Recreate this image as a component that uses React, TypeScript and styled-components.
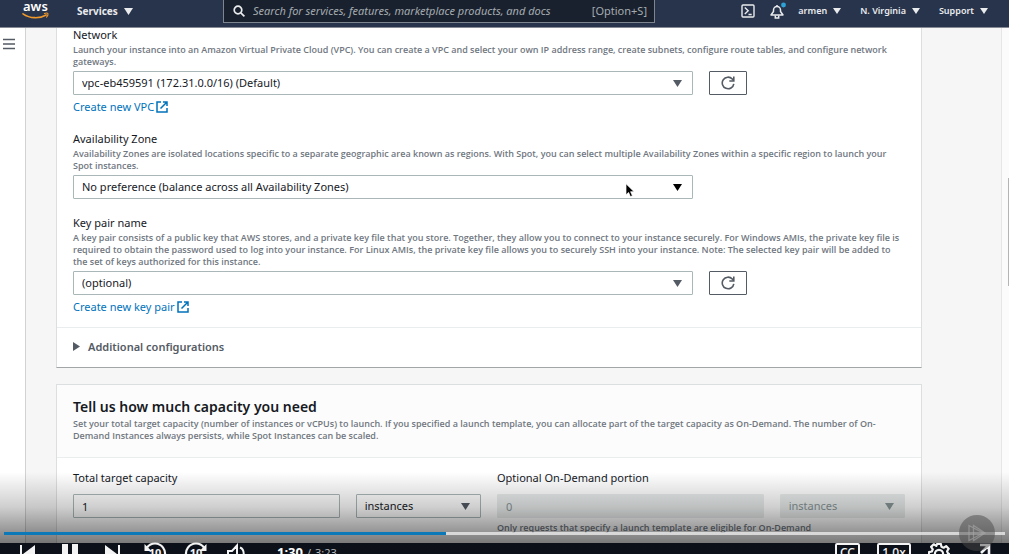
import React from 'react';
import styled, { createGlobalStyle } from 'styled-components';

const GlobalStyle = createGlobalStyle`
  *, *::before, *::after { box-sizing: border-box; }
  body { margin: 0; }
  body, button, input, select { font-family: 'Noto Sans', 'Open Sans', sans-serif; }
`;

const color = {
  nav: '#28344c',
  text: '#16191f',
  muted: '#70777f',
  icon: '#545b64',
  link: '#0073bb',
  border: '#aab7b8',
  line: '#eaeded',
};

/* ---------- shell ---------- */

const Player = styled.div`
  position: relative;
  display: flex;
  flex-direction: column;
  height: 100vh;
  overflow: hidden;
  background: #0d131c;
  color: ${color.text};
  font-size: 11px;
  line-height: 16px;
`;

const Body = styled.div`
  flex: 1;
  min-height: 0;
  display: flex;
  margin-bottom: 11px;
  background: #f6f6f6;
`;

const SideRail = styled.aside`
  flex: none;
  width: 26px;
  padding: 11px 0 0 3px;
  background: #fff;
  border-right: 1px solid #cfd3d3;
`;

const Content = styled.main`
  flex: 1;
  min-width: 0;
  overflow: hidden;
  padding: 0 79px 0 30px;
`;

const ScrollTrack = styled.div`
  flex: none;
  width: 8px;
  padding-top: 151px;
  background: #fbfbfb;
  border-left: 1px solid #e6e6e6;
`;

const ScrollThumb = styled.div`
  width: 1px;
  height: 108px;
  margin-left: auto;
  background: #b4b4b4;
`;

/* ---------- navigation ---------- */

const NavBar = styled.header`
  flex: none;
  position: relative;
  display: flex;
  align-items: center;
  height: 27px;
  padding: 0 21px 5px 22px;
  background: ${color.nav};
  box-shadow: 0 1px 0 #858a94;
  color: #e9ebed;
`;

const IconButton = styled.button`
  display: flex;
  align-items: center;
  justify-content: center;
  flex: none;
  padding: 0;
  border: 0;
  background: none;
  color: inherit;
`;

const NavMenu = styled.button<{ $large?: boolean }>`
  display: flex;
  align-items: center;
  flex: none;
  gap: 6px;
  padding: 0;
  border: 0;
  background: none;
  color: inherit;
  font-size: ${(p) => (p.$large ? 10 : 9)}px;
  font-weight: ${(p) => (p.$large ? 700 : 600)};
  line-height: 16px;
  white-space: nowrap;
`;

const ServicesSlot = styled.div`
  flex: 1 1 170px;
  max-width: 146px;
  margin-left: 28px;
`;

const SearchBox = styled.label`
  flex: 0 1 432px;
  min-width: 0;
  align-self: flex-start;
  display: flex;
  align-items: center;
  gap: 8px;
  height: 23px;
  padding: 0 7px 0 9px;
  border: 1px solid #7d858f;
  border-top: 0;
  background: #1a212e;
  color: #a4abb0;
  white-space: nowrap;
`;

const SearchInput = styled.input`
  flex: 1;
  min-width: 0;
  padding: 0;
  border: 0;
  outline: 0;
  background: none;
  color: inherit;
  font-size: 11px;
  font-style: italic;
  line-height: 16px;
  &::placeholder { color: inherit; opacity: 1; }
`;

const NavRight = styled.nav`
  display: flex;
  align-items: center;
  margin-left: auto;
  gap: 19px;
`;

const NavIcons = styled.div`
  display: flex;
  align-items: center;
  gap: 15px;
  margin-right: -7px;
`;

/* ---------- cards and form ---------- */

const Card = styled.section`
  margin-bottom: 16px;
  background: #fff;
  border: 1px solid #dcdfdf;
  border-bottom-color: #a2a6a6;
`;

const ScrolledCard = styled(Card)`
  border-top: 0;
`;

const CardBody = styled.div<{ $flush?: boolean }>`
  display: flex;
  flex-direction: column;
  gap: 16px;
  padding: ${(p) => (p.$flush ? 0 : 12)}px 16px 12px;
`;

const CardHeader = styled.div`
  padding: 12px 16px 15px;
  background: #fcfcfc;
  border-bottom: 1px solid ${color.line};
`;

const Title = styled.h2`
  margin: 0;
  font-size: 14px;
  font-weight: 600;
  line-height: 20px;
`;

const Help = styled.p`
  margin: 1px 0 0;
  color: ${color.muted};
  font-family: 'Open Sans', 'Noto Sans', sans-serif;
  font-size: 9px;
  font-weight: 600;
  line-height: 12px;
`;

const Field = styled.div`
  display: flex;
  flex-direction: column;
  min-width: 0;
`;

const Label = styled.label`
  font-size: 11px;
  line-height: 16px;
`;

const ControlRow = styled.div`
  display: grid;
  grid-template-columns: repeat(12, minmax(0, 1fr));
  column-gap: 16px;
  margin-top: 3px;
  > :first-child { grid-column: span 9; }
`;

const SelectBox = styled.div<{ $disabled?: boolean; $active?: boolean }>`
  position: relative;
  min-width: 0;
  color: ${(p) => (p.$disabled ? '#879596' : p.$active ? '#000' : color.icon)};
`;

const Select = styled.select`
  display: block;
  width: 100%;
  height: 24px;
  padding: 0 24px 2px 8px;
  appearance: none;
  border: 1px solid ${color.border};
  border-radius: 1px;
  background: #fff;
  color: ${color.text};
  font-size: 11px;
  opacity: 1;
  &:disabled { background: ${color.line}; border-color: ${color.line}; color: #879596; }
`;

const SelectCaret = styled.span`
  position: absolute;
  top: 0;
  right: 11px;
  display: flex;
  align-items: center;
  height: 24px;
  pointer-events: none;
`;

const Pointer = styled.svg`
  position: absolute;
  top: 8px;
  right: 57px;
`;

const TextInput = styled.input`
  width: 100%;
  height: 24px;
  padding: 0 8px;
  border: 1px solid ${color.border};
  border-radius: 1px;
  background: #fff;
  color: ${color.text};
  font-size: 11px;
  &:disabled { background: ${color.line}; border-color: ${color.line}; color: #879596; }
`;

const RefreshButton = styled.button`
  display: flex;
  align-items: center;
  justify-content: center;
  width: 38px;
  height: 24px;
  padding: 0;
  border: 1px solid ${color.icon};
  border-radius: 1px;
  background: #fff;
  color: ${color.icon};
`;

const ActionLink = styled.a`
  display: flex;
  align-items: center;
  align-self: flex-start;
  gap: 2px;
  margin-top: 4px;
  color: ${color.link};
  text-decoration: none;
`;

const Expander = styled.button`
  display: flex;
  align-items: center;
  gap: 8px;
  width: 100%;
  height: 40px;
  padding: 0 16px 2px;
  border: 0;
  border-top: 1px solid ${color.line};
  background: none;
  color: ${color.icon};
  font-size: 11px;
  font-weight: 600;
`;

const CapacityGrid = styled.div`
  display: grid;
  grid-template-columns: repeat(6, minmax(0, 1fr));
  column-gap: 16px;
  row-gap: 8px;
`;

const Span = styled.div<{ $cols: number; $start?: number }>`
  grid-column: ${(p) => (p.$start ? `${p.$start} / ` : '')}span ${(p) => p.$cols};
  min-width: 0;
  display: flex;
  flex-direction: column;
`;

const LowerHelp = styled(Span)`
  margin-top: -5px;
`;

/* ---------- video overlay ---------- */

const Overlay = styled.div`
  position: absolute;
  left: 0;
  right: 0;
  bottom: 0;
  display: flex;
  flex-direction: column;
  height: 82px;
  overflow: hidden;
  background: linear-gradient(rgba(0, 0, 0, 0), rgba(0, 0, 0, 0.19) 35px, rgba(0, 0, 0, 0.52) 71px, rgba(0, 0, 0, 0.1) 71px);
`;

const Seek = styled.input<{ $played: number }>`
  flex: none;
  display: block;
  height: 3px;
  margin: 60px 4px 8px;
  appearance: none;
  outline: 0;
  background: linear-gradient(to right, #0b78b8 ${(p) => p.$played}%, rgba(255, 255, 255, 0.65) ${(p) => p.$played}%);
  &::-webkit-slider-thumb { appearance: none; width: 0; height: 0; }
`;

const Controls = styled.div`
  flex: none;
  display: flex;
  align-items: flex-start;
  padding: 0 18px;
  color: #f4f4f4;
`;

const ControlGroup = styled.div<{ $gap: number; $before?: number; $end?: boolean }>`
  display: flex;
  align-items: flex-start;
  gap: ${(p) => p.$gap}px;
  margin-left: ${(p) => (p.$end ? 'auto' : `${p.$before ?? 0}px`)};
`;

const Time = styled.div`
  display: flex;
  align-items: baseline;
  gap: 4px;
  margin-left: 28px;
  font-size: 11px;
  line-height: 18px;
  color: #b5b8bc;
`;

const Elapsed = styled.strong`
  color: #fff;
  font-size: 13px;
`;

const BoxedButton = styled.button<{ $width: number }>`
  flex: none;
  width: ${(p) => p.$width}px;
  height: 20px;
  padding: 0;
  border: 2px solid #f4f4f4;
  border-radius: 2px;
  background: none;
  color: #f4f4f4;
  font-size: 12px;
  font-weight: 500;
  line-height: 16px;
`;

const Watermark = styled.svg`
  position: absolute;
  right: 14px;
  bottom: 3px;
`;

/* ---------- icons ---------- */

const Caret = ({ size = 9 }: { size?: number }) => (
  <svg width={size} height={size === 9 ? 7 : 6} viewBox="0 0 9 7" fill="currentColor" preserveAspectRatio="none" aria-hidden="true">
    <path d="M0 0h9L4.500 7z" />
  </svg>
);

const AwsLogo = () => (
  <svg width="27" height="20" viewBox="0 0 27 20" overflow="visible" role="img" aria-label="AWS">
    <text x="1" y="10" fontFamily="'Noto Sans', sans-serif" fontSize="13" fontWeight="600" fill="#fff">aws</text>
    <path d="M1 12.800c7 4.900 16.600 5 23.200 1.200" fill="none" stroke="#f0992b" strokeWidth="1.600" strokeLinecap="round" />
    <path d="M22.400 12.500c1.600-.5 3.200-.5 3.500 0 .3.600-.3 2.500-1.300 3.600" fill="none" stroke="#f0992b" strokeWidth="1.100" strokeLinecap="round" />
  </svg>
);

const RefreshIcon = () => (
  <svg width="14" height="14" viewBox="0 0 14 14" fill="none" stroke="currentColor" strokeWidth="1.600" aria-hidden="true">
    <path d="M12.800 7.800A5.800 5.800 0 1 1 11.300 3L12.500 4.600" />
    <path d="M8.300 5h4.500V.6" />
  </svg>
);

const ExternalIcon = () => (
  <svg width="12" height="12" viewBox="0 0 12 12" fill="none" stroke="currentColor" strokeWidth="1.500" aria-hidden="true">
    <path d="M5 1H1v10h10V7" />
    <path d="M7 1h4v4M11 1 4.500 7.500" />
  </svg>
);

const SkipIcon = ({ back }: { back?: boolean }) => (
  <svg width="19" height="22" viewBox="0 0 19 22" fill="currentColor" aria-hidden="true">
    {back ? <path d="M2 2h2v18H2zM17 2v18L5 11z" /> : <path d="M15 2h2v18h-2zM2 2v18l12-9z" />}
  </svg>
);

const JumpIcon = ({ back }: { back?: boolean }) => (
  <svg width="24" height="24" viewBox="0 0 24 24" overflow="visible" aria-hidden="true">
    <g fill="none" stroke="currentColor" strokeWidth="2.200">
      {back ? <path d="M4 4.500A10 10 0 1 1 2 11" /> : <path d="M20 4.500A10 10 0 1 0 22 11" />}
    </g>
    <path d={back ? 'M1.500 1v7h7z' : 'M22.500 1v7h-7z'} fill="currentColor" />
    <text x="12" y="14" textAnchor="middle" fontFamily="'Noto Sans', sans-serif" fontSize="11" fontWeight="700" fill="currentColor">10</text>
  </svg>
);

/* ---------- pieces ---------- */

type DropdownProps = { id: string; value: string; disabled?: boolean; active?: boolean; label?: string; children?: React.ReactNode };

const Dropdown = ({ id, value, disabled, active, label, children }: DropdownProps) => (
  <SelectBox $disabled={disabled} $active={active}>
    <Select id={id} disabled={disabled} aria-label={label} defaultValue={value}>
      <option>{value}</option>
    </Select>
    <SelectCaret><Caret /></SelectCaret>
    {children}
  </SelectBox>
);

const NewLink = ({ children }: { children: string }) => (
  <ActionLink href="#">{children}<ExternalIcon /></ActionLink>
);

const Refresh = ({ label }: { label: string }) => (
  <RefreshButton aria-label={label}><RefreshIcon /></RefreshButton>
);

const DURATION = 203;
const POSITION = 89.6;

export default function App() {
  return (
    <Player>
      <GlobalStyle />
      <NavBar>
        <AwsLogo />
        <ServicesSlot>
          <NavMenu $large>Services<Caret /></NavMenu>
        </ServicesSlot>
        <SearchBox>
          <svg width="12" height="12" viewBox="0 0 12 12" fill="none" stroke="#e9ebed" strokeWidth="1.700" aria-hidden="true">
            <circle cx="5" cy="5" r="3.800" />
            <path d="m7.800 7.800 3.600 3.600" />
          </svg>
          <SearchInput placeholder="Search for services, features, marketplace products, and docs" aria-label="Search" />
          <span>[Option+S]</span>
        </SearchBox>
        <NavRight>
          <NavIcons>
            <IconButton aria-label="CloudShell">
              <svg width="14" height="14" viewBox="0 0 14 14" fill="none" stroke="currentColor" strokeWidth="1.400">
                <rect x="1" y="1" width="12" height="12" rx="1" />
                <path d="m3.800 3.500 3.400 3.300-3.400 3.300M7.500 10.500h3.200" />
              </svg>
            </IconButton>
            <IconButton aria-label="Notifications">
              <svg width="16" height="18" viewBox="0 0 16 18" fill="none" stroke="currentColor" strokeWidth="1.500">
                <path d="M1 13 3.500 9.500V8a3.500 3.500 0 0 1 7 0v1.500L13 13z" strokeLinejoin="round" />
                <path d="M5.300 13.500V16h3.400v-2.500M7 4.500V3" />
                <circle cx="13.500" cy="3" r="2.400" fill="#2ea2d6" stroke="none" />
              </svg>
            </IconButton>
          </NavIcons>
          <NavMenu>armen<Caret size={8} /></NavMenu>
          <NavMenu>N. Virginia<Caret size={8} /></NavMenu>
          <NavMenu>Support<Caret size={8} /></NavMenu>
        </NavRight>
      </NavBar>

      <Body>
        <SideRail>
          <IconButton aria-label="Open menu">
            <svg width="12" height="12" viewBox="0 0 12 12" stroke="#545b64" strokeWidth="1.300">
              <path d="M0 1.500h12M0 6h12M0 10.500h12" />
            </svg>
          </IconButton>
        </SideRail>

        <Content>
          <ScrolledCard>
            <CardBody $flush>
              <Field>
                <Label htmlFor="network">Network</Label>
                <Help>
                  Launch your instance into an Amazon Virtual Private Cloud (VPC). You can create a VPC and select your own IP address range, create subnets, configure route tables, and configure network<br />gateways.
                </Help>
                <ControlRow>
                  <Dropdown id="network" value="vpc-eb459591 (172.31.0.0/16) (Default)" />
                  <Refresh label="Refresh networks" />
                </ControlRow>
                <NewLink>Create new VPC</NewLink>
              </Field>
              <Field>
                <Label htmlFor="zone">Availability Zone</Label>
                <Help>
                  Availability Zones are isolated locations specific to a separate geographic area known as regions. With Spot, you can select multiple Availability Zones within a specific region to launch your<br />Spot instances.
                </Help>
                <ControlRow>
                  <Dropdown id="zone" value="No preference (balance across all Availability Zones)" active>
                    <Pointer width="11" height="15" viewBox="0 0 11 15" aria-hidden="true">
                      <path d="M1 .8v11l2.600-2.400 1.800 4.200 2-.9-1.800-4h3.500z" fill="#000" stroke="#fff" strokeWidth=".7" />
                    </Pointer>
                  </Dropdown>
                </ControlRow>
              </Field>
              <Field>
                <Label htmlFor="keypair">Key pair name</Label>
                <Help>
                  A key pair consists of a public key that AWS stores, and a private key file that you store. Together, they allow you to connect to your instance securely. For Windows AMIs, the private key file is<br />required to obtain the password used to log into your instance. For Linux AMIs, the private key file allows you to securely SSH into your instance. Note: The selected key pair will be added to<br />the set of keys authorized for this instance.
                </Help>
                <ControlRow>
                  <Dropdown id="keypair" value="(optional)" />
                  <Refresh label="Refresh key pairs" />
                </ControlRow>
                <NewLink>Create new key pair</NewLink>
              </Field>
            </CardBody>
            <Expander aria-expanded="false">
              <svg width="7" height="9" viewBox="0 0 7 9" fill="currentColor" aria-hidden="true"><path d="M0 0v9l7-4.500z" /></svg>
              Additional configurations
            </Expander>
          </ScrolledCard>

          <Card>
            <CardHeader>
              <Title>Tell us how much capacity you need</Title>
              <Help>
                Set your total target capacity (number of instances or vCPUs) to launch. If you specified a launch template, you can allocate part of the target capacity as On-Demand. The number of On-<br />Demand Instances always persists, while Spot Instances can be scaled.
              </Help>
            </CardHeader>
            <CardBody>
              <CapacityGrid>
                <Span $cols={3}><Label htmlFor="total">Total target capacity</Label></Span>
                <Span $cols={3}><Label htmlFor="ondemand">Optional On-Demand portion</Label></Span>
                <Span $cols={2}><TextInput id="total" defaultValue="1" /></Span>
                <Span $cols={1}><Dropdown id="total-unit" value="instances" label="Total capacity unit" /></Span>
                <Span $cols={2}><TextInput id="ondemand" defaultValue="0" disabled /></Span>
                <Span $cols={1}><Dropdown id="ondemand-unit" value="instances" label="On-Demand unit" disabled /></Span>
                <LowerHelp $cols={3} $start={4}>
                  <Help>Only requests that specify a launch template are eligible for On-Demand</Help>
                </LowerHelp>
              </CapacityGrid>
            </CardBody>
          </Card>
        </Content>

        <ScrollTrack><ScrollThumb /></ScrollTrack>
      </Body>

      <Overlay>
        <Seek type="range" min={0} max={DURATION} step={0.1} defaultValue={POSITION} $played={(POSITION / DURATION) * 100} aria-label="Seek" />
        <Controls>
          <ControlGroup $gap={23}>
            <IconButton aria-label="Previous"><SkipIcon back /></IconButton>
            <IconButton aria-label="Pause">
              <svg width="20" height="22" viewBox="0 0 20 22" fill="currentColor"><path d="M2 1h6v20H2zM12 1h6v20h-6z" /></svg>
            </IconButton>
            <IconButton aria-label="Next"><SkipIcon /></IconButton>
          </ControlGroup>
          <ControlGroup $gap={17} $before={21}>
            <IconButton aria-label="Back 10 seconds"><JumpIcon back /></IconButton>
            <IconButton aria-label="Forward 10 seconds"><JumpIcon /></IconButton>
            <IconButton aria-label="Volume">
              <svg width="24" height="22" viewBox="0 0 24 22" fill="none" stroke="currentColor" strokeWidth="2">
                <path d="M3 8h4l5-5.500v17L7 14H3z" />
                <path d="M15 4.500c5 2 5 11 0 13" />
              </svg>
            </IconButton>
          </ControlGroup>
          <Time><Elapsed>1:30</Elapsed><span>/</span><span>3:23</span></Time>
          <ControlGroup $gap={17} $end>
            <BoxedButton $width={25}>CC</BoxedButton>
            <BoxedButton $width={34}>1.0x</BoxedButton>
            <IconButton aria-label="Settings">
              <svg width="22" height="22" viewBox="0 0 24 24" fill="none" stroke="currentColor" strokeWidth="2.400" strokeLinejoin="round">
                <path d="M10 1h4l.7 3.200 2.300 1 2.800-1.800 2.800 2.800L20.800 9l1 2.300L23 12v2l-3.200.7-1 2.300 1.800 2.800-2.800 2.800L15 20.800 14 23h-4l-1-2.200-2.800 1.800-2.800-2.800L5.200 17l-1-2.300L1 14v-4l3.200-.7 1-2.300-1.800-2.800 2.800-2.800L9 3.200z" />
                <circle cx="12" cy="12" r="4.500" />
              </svg>
            </IconButton>
            <IconButton aria-label="Full screen">
              <svg width="24" height="22" viewBox="0 0 24 22" fill="none" stroke="currentColor" strokeWidth="2.600">
                <path d="M13 2h9v9M22 2l-8 8M4 13v7h9" />
              </svg>
            </IconButton>
          </ControlGroup>
        </Controls>
        <Watermark width="36" height="36" viewBox="0 0 36 36" aria-hidden="true">
          <circle cx="18" cy="18" r="18" fill="#4a4a4a" fillOpacity=".5" />
          <path d="M10 10.500v15L24 18zM14.500 10.500v15l11.500-7.500z" fill="none" stroke="#a8a8a8" strokeOpacity=".6" strokeWidth="1.300" />
        </Watermark>
      </Overlay>
    </Player>
  );
}
